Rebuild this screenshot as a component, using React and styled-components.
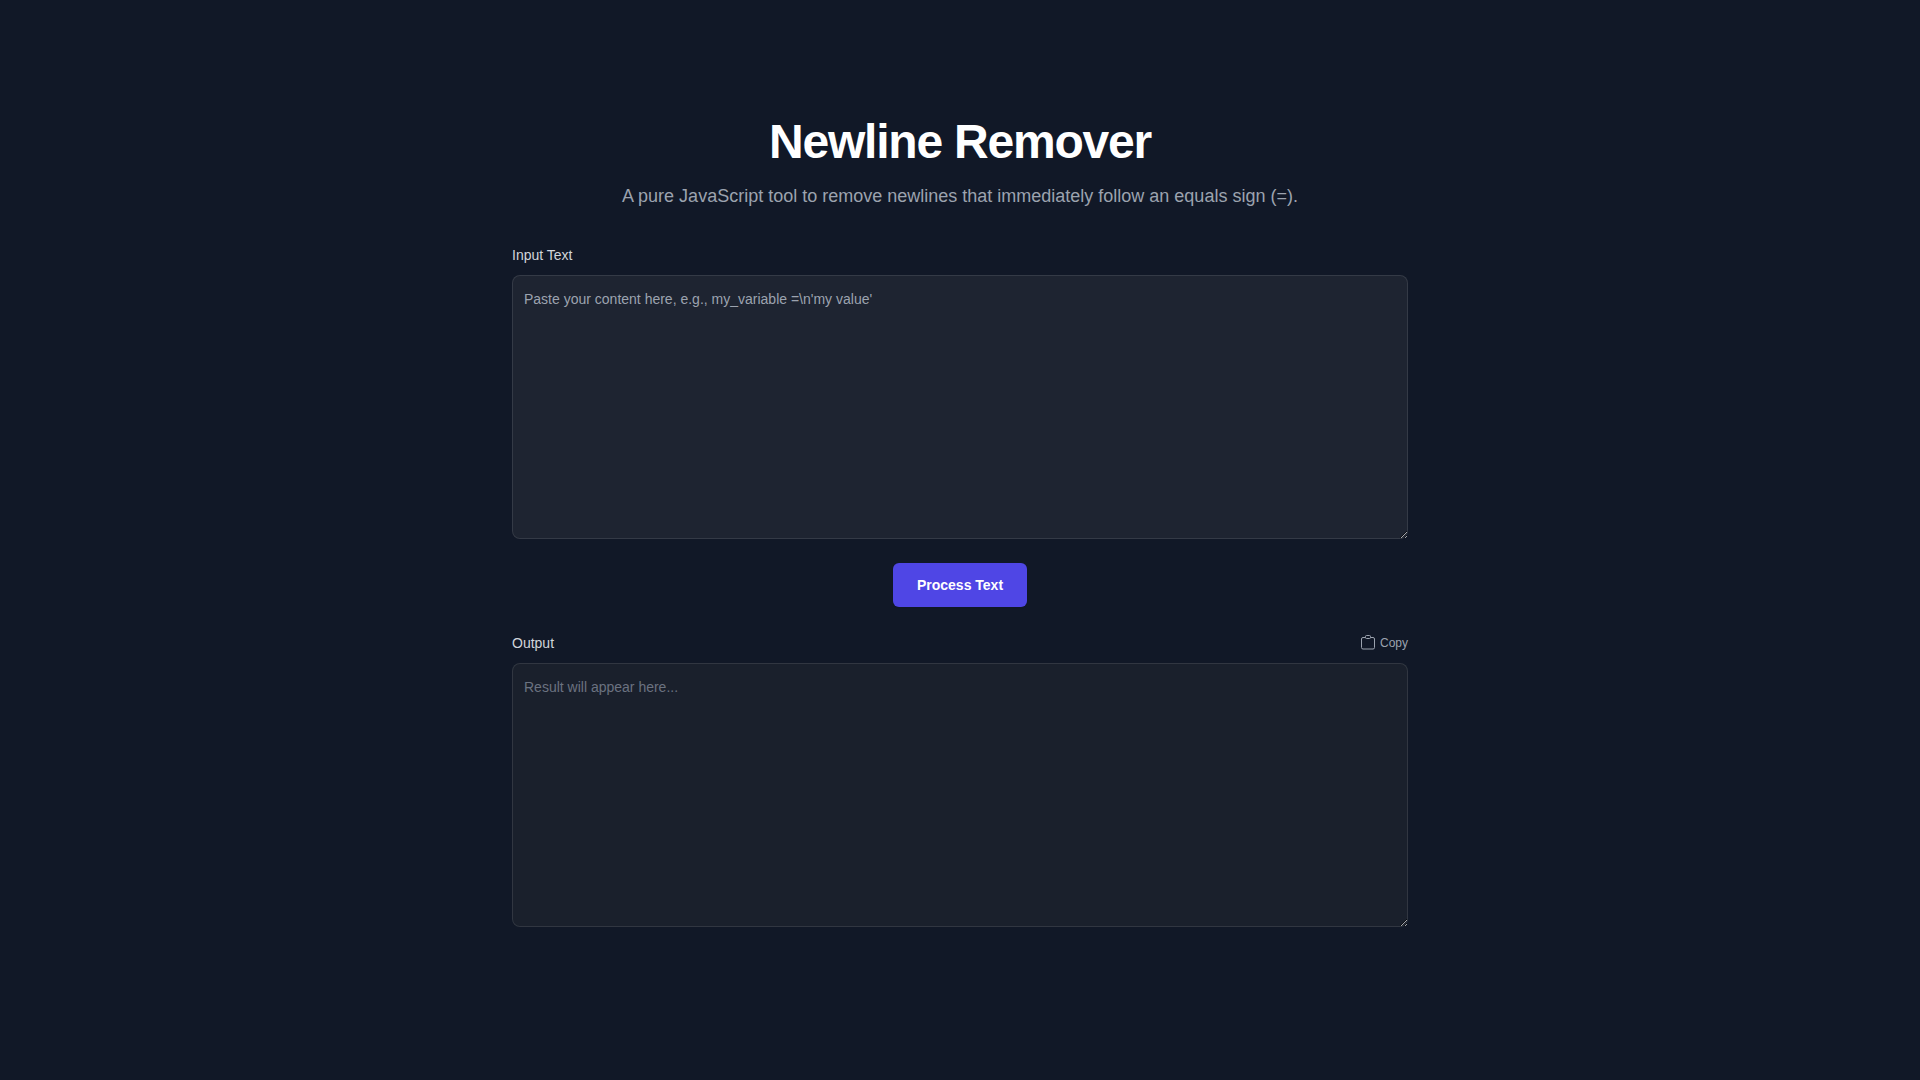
import React from 'react'
import styled, { createGlobalStyle } from 'styled-components'

const GlobalStyle = createGlobalStyle`
  * {
    box-sizing: border-box;
  }

  body {
    margin: 0;
    background: #111827;
    color: #f3f4f6;
    font-family: "Liberation Sans", Arial, sans-serif;
  }
`

const Page = styled.main`
  min-height: 100vh;
  display: flex;
  justify-content: center;
  padding: 118px 16px 48px;
`

const Container = styled.div`
  width: 896px;
  display: flex;
  flex-direction: column;
`

const Header = styled.header`
  text-align: center;
  margin-bottom: 35px;
`

const Title = styled.h1`
  margin: 0;
  font-size: 48px;
  line-height: 48px;
  font-weight: 700;
  letter-spacing: -1.2px;
  color: #fff;
`

const Subtitle = styled.p`
  margin: 16px 0 0;
  font-size: 18px;
  line-height: 28px;
  color: #9ca3af;
`

const LabelRow = styled.div`
  display: flex;
  justify-content: space-between;
  align-items: center;
  min-height: 20px;
  margin-bottom: 10px;
`

const Label = styled.label`
  font-size: 14px;
  line-height: 20px;
  font-weight: 500;
  color: #d1d5db;
`

const TextBox = styled.textarea`
  display: block;
  width: 100%;
  height: 264px;
  padding: 12px;
  border: 0;
  border-radius: 8px;
  outline: none;
  box-shadow: inset 0 0 0 1px rgba(255, 255, 255, 0.1);
  background: ${(p) => (p.$muted ? '#1a202c' : '#1e2431')};
  color: #d1d5db;
  font-family: inherit;
  font-size: 14px;
  line-height: 24px;

  &::placeholder {
    color: ${(p) => (p.$muted ? '#6b7280' : '#9ca3af')};
    opacity: 1;
  }
`

const Actions = styled.div`
  display: flex;
  justify-content: center;
  margin: 24px 0 26px;
`

const ProcessButton = styled.button`
  height: 44px;
  padding: 0 24px;
  border: 0;
  border-radius: 6px;
  background: #4f46e5;
  color: #fff;
  font-family: inherit;
  font-size: 14px;
  font-weight: 700;
  cursor: pointer;
  box-shadow: 0 1px 2px rgba(0, 0, 0, 0.05);
`

const CopyButton = styled.button`
  display: flex;
  align-items: center;
  gap: 4px;
  padding: 0;
  border: 0;
  background: none;
  color: #9ca3af;
  font-family: inherit;
  font-size: 12px;
  line-height: 16px;
  cursor: pointer;
`

const ClipboardIcon = () => (
  <svg width="16" height="16" viewBox="0 0 16 16" fill="none" stroke="currentColor" strokeWidth="1">
    <path d="M5.5 2.5H3A1.5 1.5 0 0 0 1.5 4v8.5A1.5 1.5 0 0 0 3 14h10a1.5 1.5 0 0 0 1.5-1.5V4A1.5 1.5 0 0 0 13 2.5h-2.5" />
    <rect x="5.5" y="0.5" width="5" height="3" rx="1" />
  </svg>
)

const App = () => (
  <>
    <GlobalStyle />
    <Page>
      <Container>
        <Header>
          <Title>Newline Remover</Title>
          <Subtitle>A pure JavaScript tool to remove newlines that immediately follow an equals sign (=).</Subtitle>
        </Header>
        <LabelRow>
          <Label htmlFor="input">Input Text</Label>
        </LabelRow>
        <TextBox id="input" placeholder="Paste your content here, e.g., my_variable =\n'my value'" />
        <Actions>
          <ProcessButton type="button">Process Text</ProcessButton>
        </Actions>
        <LabelRow>
          <Label htmlFor="output">Output</Label>
          <CopyButton type="button">
            <ClipboardIcon />
            Copy
          </CopyButton>
        </LabelRow>
        <TextBox id="output" $muted readOnly placeholder="Result will appear here..." />
      </Container>
    </Page>
  </>
)

export default App
